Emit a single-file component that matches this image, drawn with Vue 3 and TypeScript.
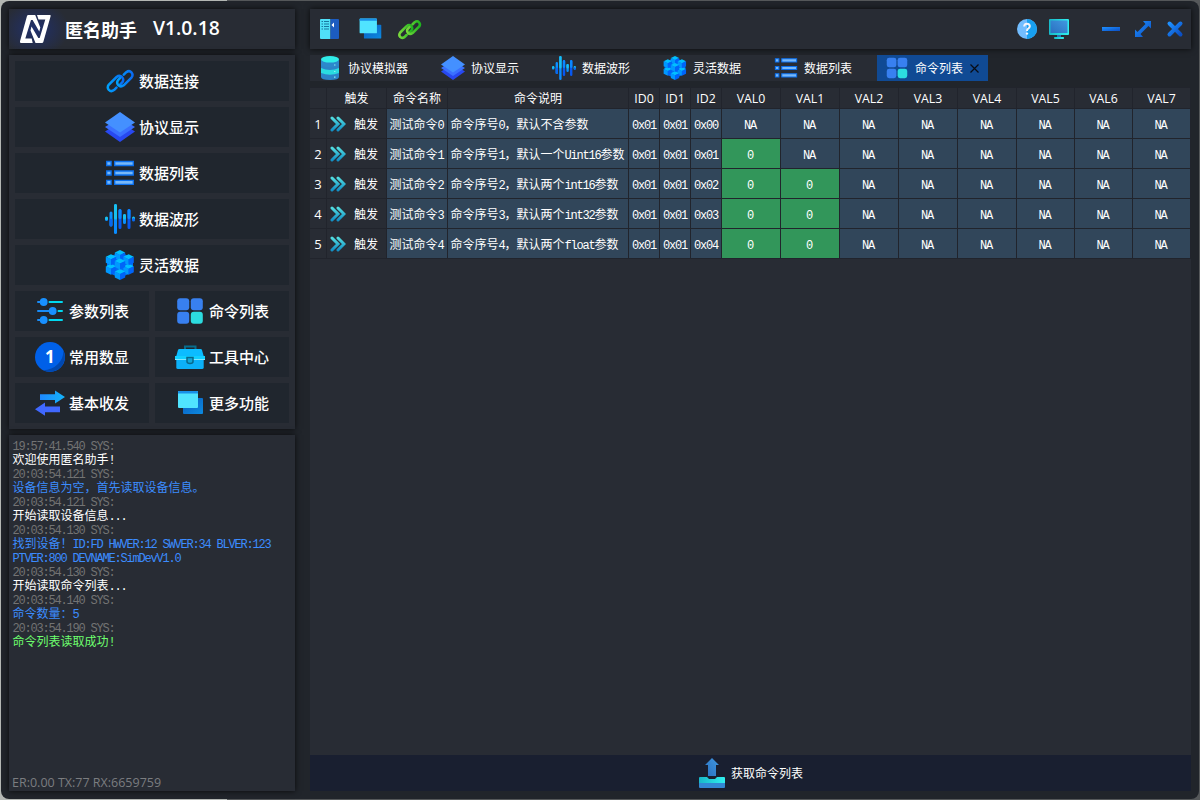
<script setup lang="ts">
interface Item { icon: string; label: string }
interface LogLine { text: string; kind: 'time' | 'info' | 'note' | 'ok' }
interface Run { text: string; latin: boolean }

const mainMenu: Item[] = [
  { icon: 'link', label: '数据连接' },
  { icon: 'layers', label: '协议显示' },
  { icon: 'list', label: '数据列表' },
  { icon: 'wave', label: '数据波形' },
  { icon: 'cubes', label: '灵活数据' },
]
const subMenu: Item[] = [
  { icon: 'sliders', label: '参数列表' },
  { icon: 'grid', label: '命令列表' },
  { icon: 'one', label: '常用数显' },
  { icon: 'toolbox', label: '工具中心' },
  { icon: 'swap', label: '基本收发' },
  { icon: 'windows', label: '更多功能' },
]
const tabs: Item[] = [
  { icon: 'database', label: '协议模拟器' },
  { icon: 'layers', label: '协议显示' },
  { icon: 'wave', label: '数据波形' },
  { icon: 'cubes', label: '灵活数据' },
  { icon: 'list', label: '数据列表' },
  { icon: 'grid', label: '命令列表' },
]
const activeTab = 5

const log: LogLine[] = [
  { text: '19:57:41.540 SYS:', kind: 'time' },
  { text: '欢迎使用匿名助手!', kind: 'info' },
  { text: '20:03:54.121 SYS:', kind: 'time' },
  { text: '设备信息为空，首先读取设备信息。', kind: 'note' },
  { text: '20:03:54.121 SYS:', kind: 'time' },
  { text: '开始读取设备信息...', kind: 'info' },
  { text: '20:03:54.130 SYS:', kind: 'time' },
  { text: '找到设备！ID:FD HWVER:12 SWVER:34 BLVER:123 PTVER:800 DEVNAME:SimDevV1.0', kind: 'note' },
  { text: '20:03:54.130 SYS:', kind: 'time' },
  { text: '开始读取命令列表...', kind: 'info' },
  { text: '20:03:54.140 SYS:', kind: 'time' },
  { text: '命令数量：5', kind: 'note' },
  { text: '20:03:54.190 SYS:', kind: 'time' },
  { text: '命令列表读取成功!', kind: 'ok' },
]

const headers = ['命令名称', '命令说明', 'ID0', 'ID1', 'ID2', 'VAL0', 'VAL1', 'VAL2', 'VAL3', 'VAL4', 'VAL5', 'VAL6', 'VAL7']
const descriptions = ['默认不含参数', '默认一个Uint16参数', '默认两个int16参数', '默认两个int32参数', '默认两个float参数']
const argCounts = [0, 1, 2, 2, 2]
const rows = descriptions.map((d, i) => ({
  name: `测试命令${i}`,
  desc: `命令序号${i}，${d}`,
  ids: ['0x01', '0x01', `0x0${i}`],
  values: Array.from({ length: 8 }, (_, v) => (v < argCounts[i] ? '0' : 'NA')),
}))

/** Splits mixed text so that Latin runs can be set at half the width of a CJK glyph. */
function runs(text: string): Run[] {
  return (text.match(/[\x20-\x7e]+|[^\x20-\x7e]+/g) ?? []).map((t) => ({ text: t, latin: t.charCodeAt(0) < 0x7f }))
}
</script>

<template>
  <div class="desktop">
    <svg class="defs" width="0" height="0" aria-hidden="true">
      <defs>
        <linearGradient id="gBlue" x1="0" y1="0" x2="1" y2="1"><stop offset="0" stop-color="#1e90ff" /><stop offset="1" stop-color="#0b4fc4" /></linearGradient>
        <linearGradient id="gLink" x1="0" y1="0" x2="1" y2="0"><stop offset="0" stop-color="#00a0fa" /><stop offset="1" stop-color="#0a6cf5" /></linearGradient>
        <linearGradient id="gGreen" x1="0" y1="0" x2="1" y2="0"><stop offset="0" stop-color="#78d83c" /><stop offset="1" stop-color="#1eb41e" /></linearGradient>
        <linearGradient id="gBack" x1="0" y1="0" x2="1" y2="1"><stop offset="0" stop-color="#0a5cc0" /><stop offset="1" stop-color="#0c8ae0" /></linearGradient>
        <linearGradient id="gSwap" x1="0" y1="0" x2="1" y2="0"><stop offset="0" stop-color="#1e88ff" /><stop offset="1" stop-color="#14b4fa" /></linearGradient>
        <linearGradient id="gTeal" x1="0" y1="0" x2="0" y2="1"><stop offset="0" stop-color="#50dce0" /><stop offset="1" stop-color="#1490c4" /></linearGradient>
        <linearGradient id="gCyan" x1="0" y1="0" x2="1" y2="0"><stop offset="0" stop-color="#18b8c8" /><stop offset="1" stop-color="#30f0f0" /></linearGradient>
        <linearGradient id="gScreen" x1="0" y1="1" x2="1" y2="0"><stop offset="0" stop-color="#2a70c0" /><stop offset="1" stop-color="#4098e0" /></linearGradient>
        <g id="cube">
          <path d="M5.200 0 10.400 2.500 5.200 5 0 2.500Z" fill="#00c0ff" />
          <path d="M0 2.500 5.200 5V11L0 8.500Z" fill="#0098ff" />
          <path d="M10.400 2.500 5.200 5V11L10.400 8.500Z" fill="#0064f8" />
        </g>
      </defs>
      <symbol id="link" viewBox="0 0 30 30">
        <g fill="none" stroke="url(#gLink)" stroke-width="2.500" stroke-linecap="round" stroke-linejoin="round">
          <path d="M11.500 21.600 9 24.100Q6 26.200 4 24Q1.600 21.700 3.900 18.600L11.600 11Q14.500 8.700 17 11Q19.200 13.400 17.400 16.200L15.300 18.300" />
          <path d="M18.800 8.700 21.300 6.200Q24.300 4 26.400 6.300Q28.600 8.700 26.500 11.600L18.700 19.300Q15.700 21.500 13.300 19.200Q11.200 16.700 13 14.200L15 12.100" />
        </g>
      </symbol>
      <symbol id="greenlink" viewBox="0 0 30 30">
        <g fill="none" stroke="url(#gGreen)" stroke-width="3.100" stroke-linecap="round" stroke-linejoin="round">
          <path d="M11.500 21.600 9 24.100Q6 26.200 4 24Q1.600 21.700 3.900 18.600L11.600 11Q14.500 8.700 17 11Q19.200 13.400 17.400 16.200L15.300 18.300" />
          <path d="M18.800 8.700 21.300 6.200Q24.300 4 26.400 6.300Q28.600 8.700 26.500 11.600L18.700 19.300Q15.700 21.500 13.300 19.200Q11.200 16.700 13 14.200L15 12.100" />
        </g>
      </symbol>
      <symbol id="layers" viewBox="0 0 30 30">
        <path d="M0 19.500 15 10 30 19.500 15 30Z" fill="#2848f0" />
        <path d="M0 15 15 5.500 30 15 15 25Z" fill="#3a70ff" />
        <path d="M0 10.500 15 0 30 10.500 15 20.500Z" fill="#4490ff" />
      </symbol>
      <symbol id="list" viewBox="0 0 30 30">
        <g fill="#78b8f8" stroke="#0a70f0" stroke-width="1.300">
          <path d="M1.700 3.500H6.100V7.500H1.700ZM1.700 13H6.100V17H1.700ZM1.700 22.300H6.100V26.300H1.700Z" />
          <path d="M9.700 3.500H28.300V7.500H9.700ZM9.700 13H28.300V17H9.700ZM9.700 22.300H28.300V26.300H9.700Z" />
        </g>
      </symbol>
      <symbol id="wave" viewBox="0 0 30 30">
        <g stroke-width="3" stroke-linecap="round">
          <path d="M1.500 14.500V15.500M6 9V21M19.500 11.500V18.500" stroke="#0a90ff" />
          <path d="M10.500 1.500V28.500" stroke="#0a8cff" />
          <path d="M10.500 1.500V14M19.500 11.500V14M28.500 14V15M1.500 14V14.500" stroke="#18c0f0" />
          <path d="M15 6.500V23.500M24 6.500V23.500" stroke="#0858f0" />
          <path d="M15 6.500V13.500M24 6.500V13.500" stroke="#0a88ff" />
          <path d="M6 16V21M28.500 15.500V16" stroke="#0868f0" />
        </g>
      </symbol>
      <symbol id="cubes" viewBox="0 0 30 30">
        <path d="M2 8 15 2 28 8V22L15 28 2 22Z" fill="#0070f4" />
        <use href="#cube" x=".8" y="13.800" /><use href="#cube" x="18.400" y="13.800" /><use href="#cube" x="9.800" y="19" />
        <use href="#cube" x="9.800" y="0" /><use href="#cube" x=".8" y="4.200" /><use href="#cube" x="18.400" y="4.200" /><use href="#cube" x="9.800" y="8.600" />
      </symbol>
      <symbol id="sliders" viewBox="0 0 30 30">
        <g stroke-width="2" stroke-linecap="round"><path d="M3 6H8M3 15H17M3 24H8" stroke="#188cf8" /><path d="M14.500 6H27M23.500 15H27M14.500 24H27" stroke="#00d8f0" /></g>
        <g fill="#1890ff"><circle cx="8.700" cy="6" r="3.900" /><circle cx="17.700" cy="15" r="3.900" /><circle cx="8.700" cy="24" r="3.900" /></g>
      </symbol>
      <symbol id="grid" viewBox="0 0 30 30">
        <g fill="#3880f0"><rect x="2.200" y="2.200" width="12" height="12" rx="3" /><rect x="15.800" y="2.200" width="12" height="12" rx="3" /><rect x="2.200" y="15.800" width="12" height="12" rx="3" /></g>
        <rect x="15.800" y="15.800" width="12" height="12" rx="3" fill="#2cdce0" />
      </symbol>
      <symbol id="one" viewBox="0 0 30 30">
        <circle cx="15" cy="15" r="15" fill="#0060e8" />
        <path d="M28.200 8A15 15 0 0 1 8 28.200Q17 28 23 22T28.200 8Z" fill="#0048b0" />
      </symbol>
      <symbol id="toolbox" viewBox="0 0 30 30">
        <path d="M10 8V4.500H20.500V8" fill="none" stroke="#086c8c" stroke-width="2" />
        <path d="M1.300 14 3 8Q3.300 7 4.500 7H25.500Q26.700 7 27 8L28.700 14Z" fill="#0cbcff" />
        <path d="M1.300 17H28.700V25.500Q28.700 27 27 27H3Q1.300 27 1.300 25.500Z" fill="#0cb0f8" />
        <path d="M0 14H30V17.500H0Z" fill="#10d0ff" /><path d="M0 17H30V18H0Z" fill="#80e8ff" />
        <path d="M12 15.500H18V19.500Q18 21.500 15 21.500T12 19.500Z" fill="#10a8d8" stroke="#08688c" stroke-width="1.500" />
      </symbol>
      <symbol id="swap" viewBox="0 0 30 30">
        <path d="M5 6.200H20V2.500L30 9 20 15.500V12H5Z" fill="url(#gSwap)" />
        <path d="M25 18.500H10V14.500L0 21.200 10 27.800V24.200H25Z" fill="#4068ff" />
      </symbol>
      <symbol id="windows" viewBox="0 0 30 30">
        <rect x="8" y="10" width="20" height="16" rx="1" fill="url(#gBack)" />
        <rect x="3" y="3" width="20" height="17" rx="1" fill="#50e4ff" /><path d="M4 3H22Q23 3 23 4V5.500H3V4Q3 3 4 3Z" fill="#1890e8" />
      </symbol>
      <symbol id="database" viewBox="0 0 24 24">
        <path d="M3 5H21V21Q21 24 12 24T3 21Z" fill="#2c84c8" />
        <path d="M3 12Q12 16 21 12V17Q12 20.500 3 17Z" fill="#2adce0" />
        <path d="M3 3.500V9.500Q12 13 21 9.500V3.500Z" fill="#2c88cc" />
        <ellipse cx="12" cy="3.300" rx="9" ry="3.300" fill="#30ece8" />
        <path d="M16 9h1.500M16 15.500h1.500M16 21.200h1.500" stroke="#86f0f0" stroke-width="1.200" />
      </symbol>
      <symbol id="panel" viewBox="0 0 20 20">
        <path d="M1 0H10.500V20H1Q0 20 0 19V1Q0 0 1 0Z" fill="#50e0f8" /><path d="M10.500 0H18Q19 0 19 1V19Q19 20 18 20H10.500Z" fill="#1c5cc0" />
        <path d="M1.500 2.500H3M4 2.500H9M1.500 5H3M4 5H9M1.500 7.500H3M4 7.500H9M1.500 10H3M4 10H9" stroke="#1878a0" />
        <path d="M14 3.500V8.500L11.500 6Z" fill="#fff" />
      </symbol>
      <symbol id="help" viewBox="0 0 20 20">
        <circle cx="10" cy="10" r="10" fill="#72bdff" /><path d="M10 0A10 10 0 0 1 10 20Z" fill="#18a0f0" />
        <path d="M7.200 7.500Q7.200 4.700 10 4.700T12.800 7.300Q12.800 8.800 11.200 9.700 10 10.300 10 12" fill="none" stroke="#f4f4fa" stroke-width="2" /><circle cx="10" cy="14.600" r="1.200" fill="#f4f4fa" />
      </symbol>
      <symbol id="monitor" viewBox="0 0 20 20">
        <path d="M8 15H12V18.500H8Z" fill="#2870b8" /><rect x="5" y="18" width="10" height="2" rx=".8" fill="url(#gCyan)" />
        <rect x="0" y="0" width="20" height="16" rx="1" fill="url(#gCyan)" /><rect x="1.500" y="1.500" width="17" height="12.500" fill="url(#gScreen)" />
      </symbol>
      <symbol id="minimize" viewBox="0 0 20 20"><rect x="1" y="8" width="18" height="4" fill="url(#gBlue)" /></symbol>
      <symbol id="expand" viewBox="0 0 20 20"><path d="M10 2H18V9.500L15.500 7 7.500 15 10 18H2V10.500L4.500 13 12.500 5Z" fill="url(#gBlue)" /></symbol>
      <symbol id="close" viewBox="0 0 20 20"><path d="M4.500 4.500 15.500 15.500M15.500 4.500 4.500 15.500" stroke="url(#gBlue)" stroke-width="4" stroke-linecap="round" /></symbol>
      <symbol id="chevrons" viewBox="0 0 16 16">
        <path d="M2 2 8 8 2 14M8 2 14 8 8 14" fill="none" stroke="url(#gTeal)" stroke-width="3" stroke-linecap="round" />
      </symbol>
      <symbol id="upload" viewBox="0 0 26 30">
        <path d="M13 0 20 7H17V18H9V7H6Z" fill="url(#gScreen)" />
        <path d="M1 19H8L10 21H16L18 19H25Q26 19 26 20V25H0V20Q0 19 1 19Z" fill="url(#gCyan)" /><path d="M0 25H26V29Q26 30 25 30H1Q0 30 0 29Z" fill="#3288d4" />
      </symbol>
      <symbol id="logo" viewBox="0 0 32 30">
        <g fill="#fff">
          <path d="M9.300 1H16.200L21.300 13.500 20.300 17.500 13.600 6H12L6.300 24.500H12.700L13.700 29H2Q.5 29 1 27.300L8 2Q8.300 1 9.300 1Z" />
          <path d="M18 1H31Q32 1 31.600 2.200L24.300 28Q24 29 23 29H16.500L11.500 16.500 12.500 12.500 19.300 24H20.700L26.300 5.500H19.500Z" />
        </g>
      </symbol>
    </svg>

    <div class="window">
      <aside class="side">
        <header class="brand panel">
          <span class="logo"><svg width="32" height="30"><use href="#logo" /></svg></span>
          <span class="brand-name">匿名助手</span>
          <span class="version">V1.0.18</span>
        </header>
        <nav class="menu panel">
          <button v-for="m in mainMenu" :key="m.label" class="menu-btn wide"><svg width="30" height="30"><use :href="'#' + m.icon" /></svg><span>{{ m.label }}</span></button>
          <button v-for="m in subMenu" :key="m.label" class="menu-btn">
            <span class="menu-icon"><svg width="30" height="30"><use :href="'#' + m.icon" /></svg><b v-if="m.icon === 'one'">1</b></span><span>{{ m.label }}</span>
          </button>
        </nav>
        <section class="log panel">
          <div class="log-lines bitmap">
            <p v-for="(l, i) in log" :key="i" :class="l.kind"><span v-for="(r, k) in runs(l.text)" :key="k" :class="{ latin: r.latin }">{{ r.text }}</span></p>
          </div>
          <div class="status">ER:0.00 TX:77 RX:6659759</div>
        </section>
      </aside>

      <main class="main">
        <header class="toolbar panel">
          <svg class="tool" width="20" height="20"><use href="#panel" /></svg>
          <svg class="tool" width="26" height="26"><use href="#windows" /></svg>
          <svg class="tool" width="25" height="25"><use href="#greenlink" /></svg>
          <span class="spacer"></span>
          <svg class="ctl" width="20" height="20"><use href="#help" /></svg>
          <svg class="ctl" width="20" height="20"><use href="#monitor" /></svg>
          <svg class="ctl apart" width="20" height="20"><use href="#minimize" /></svg>
          <svg class="ctl" width="20" height="20"><use href="#expand" /></svg>
          <svg class="ctl" width="20" height="20"><use href="#close" /></svg>
        </header>
        <div class="tabs">
          <div v-for="(t, i) in tabs" :key="t.label" class="tab" :class="{ active: i === activeTab }">
            <svg width="24" height="24"><use :href="'#' + t.icon" /></svg><span>{{ t.label }}</span>
            <svg v-if="i === activeTab" class="tab-close" width="9" height="9" viewBox="0 0 9 9"><path d="M.5.5 8.500 8.500M8.500.5.5 8.500" stroke="#080c14" stroke-width="1.200" /></svg>
          </div>
        </div>
        <section class="content">
          <div class="table">
            <div class="row head">
              <div></div><div>触发</div><div v-for="h in headers" :key="h">{{ h }}</div>
            </div>
            <div v-for="(r, i) in rows" :key="r.name" class="row bitmap">
              <div class="num">{{ i + 1 }}</div>
              <div class="trigger"><svg width="16" height="16"><use href="#chevrons" /></svg><span>触发</span></div>
              <div class="cell left"><p><span v-for="(p, k) in runs(r.name)" :key="k" :class="{ latin: p.latin }">{{ p.text }}</span></p></div>
              <div class="cell left"><p><span v-for="(p, k) in runs(r.desc)" :key="k" :class="{ latin: p.latin }">{{ p.text }}</span></p></div>
              <div v-for="(v, k) in r.ids" :key="'i' + k" class="cell"><p><span class="latin">{{ v }}</span></p></div>
              <div v-for="(v, k) in r.values" :key="'v' + k" class="cell value" :class="{ editable: v !== 'NA' }"><p><span class="latin">{{ v }}</span></p></div>
            </div>
          </div>
        </section>
        <button class="fetch"><svg width="26" height="30"><use href="#upload" /></svg><span>获取命令列表</span></button>
      </main>
    </div>
  </div>
</template>

<style>
body { margin: 0; background: #aaadac; }
</style>

<style scoped>
.desktop { width: 1200px; height: 800px; box-sizing: border-box; padding: 1px; overflow: hidden; background: linear-gradient(90deg, #b4b8b4 0 227px, #55585a 227px); font-family: "Open Sans", "Noto Sans CJK SC", sans-serif; }
.defs { position: absolute; }
.window { box-sizing: border-box; width: 1198px; height: 798px; border-radius: 8px; background: #21252b; padding: 8px; display: flex; gap: 15px; }
.panel { background: #282c34; box-shadow: 0 0 6px rgba(0, 0, 0, .75); }
.side { width: 286px; display: flex; flex-direction: column; gap: 6px; }
.brand { height: 40px; display: flex; align-items: center; color: #fff; font-weight: 600; white-space: nowrap; background: radial-gradient(ellipse 34px 28px at 26px 20px, #20306c, #282c34); }
.logo { width: 32px; height: 30px; margin-left: 10px; }
.logo svg { display: block; }
.brand-name { margin-left: 14px; font: 700 18px/40px "Noto Sans CJK SC", sans-serif; }
.version { margin-left: 16px; font-size: 19.300px; line-height: 26px; margin-top: -2px; }
.menu { box-sizing: border-box; height: 374px; padding: 6px; display: grid; grid-template-columns: 134px 134px; grid-auto-rows: 40px; gap: 6px; }
button { border: 0; padding: 0; margin: 0; }
p { margin: 0; }
.menu-btn { display: flex; align-items: center; justify-content: center; gap: 4px; background: #20262e; color: #fff; font: 500 15px/20px "Noto Sans CJK SC", sans-serif; white-space: nowrap; }
.wide { grid-column: span 2; }
.menu-icon { position: relative; width: 30px; height: 30px; }
.menu-icon svg { display: block; }
.menu-icon b { position: absolute; inset: 0; text-align: center; font: 700 17px/30px "Open Sans", sans-serif; }
.log { flex: 1; min-height: 0; display: flex; flex-direction: column; justify-content: space-between; padding: 3px 4px 0 3px; }
.bitmap { font-family: "Noto Sans CJK SC", sans-serif; font-size: 12px; }
.bitmap p { line-height: 14px; }
.latin { font-family: "Liberation Mono", monospace; font-size: 12px; letter-spacing: -1.200px; line-height: 0; }
.log-lines p { width: 265px; padding-left: .5px; }
.time { color: #737373; }
.info { color: #fff; }
.note { color: #3c8cff; }
.ok { color: #6eff6e; }
.status { font-size: 12.500px; line-height: 16px; color: #7b7d80; }
.main { width: 881px; display: flex; flex-direction: column; }
.toolbar { box-sizing: border-box; height: 40px; display: flex; align-items: center; padding: 0 6px 0 10px; flex: none; }
.tool + .tool { margin-left: 17px; }
.tool + .tool + .tool { margin-left: 14px; }
.spacer { flex: 1; }
.ctl { margin-left: 12px; }
.apart { margin-left: 32px; }
.tabs { margin-top: 6px; height: 26px; display: flex; align-self: flex-start; background: #282c34; font: 12px/26px "Noto Sans CJK SC", sans-serif; color: #fff; flex: none; }
.tab { box-sizing: border-box; width: 111px; padding-left: 8px; display: flex; align-items: center; white-space: nowrap; }
.tab:first-child { width: 123px; }
.tab span { margin-left: 6px; }
.tab.active { background: #104a94; }
.tab-close { margin-left: 7px; }
.content { margin-top: 6px; flex: 1; min-height: 0; background: #282c34; }
.table { background: #21242c; padding: 1px 0; }
.row { display: grid; grid-template-columns: 16px 59px 60px 180px repeat(3, 30px) repeat(5, 58px) repeat(3, 57px); column-gap: 1px; height: 29px; margin-bottom: 1px; color: #fff; white-space: nowrap; }
.row:last-child { margin-bottom: 0; }
.row > div { display: flex; align-items: center; justify-content: center; background: #282c34; min-width: 0; }
.row.head { height: 20px; font-size: 12.300px; }
.row.head > div:nth-child(-n+4) { font-size: 12px; }
.row .num { font: 13px "Open Sans", sans-serif; }
.row .trigger { justify-content: flex-start; gap: 8px; padding-left: 3px; }
.row .cell { background: #31465a; }
.row .value { padding-right: 2px; }
.row .left { justify-content: flex-start; padding-left: 2.500px; }
.row .editable { background: #32965a; }
.fetch { height: 36px; flex: none; display: flex; align-items: center; justify-content: center; gap: 6px; background: #191f30; color: #fff; font: 12px/20px "Noto Sans CJK SC", sans-serif; padding-left: 1px; }
</style>
